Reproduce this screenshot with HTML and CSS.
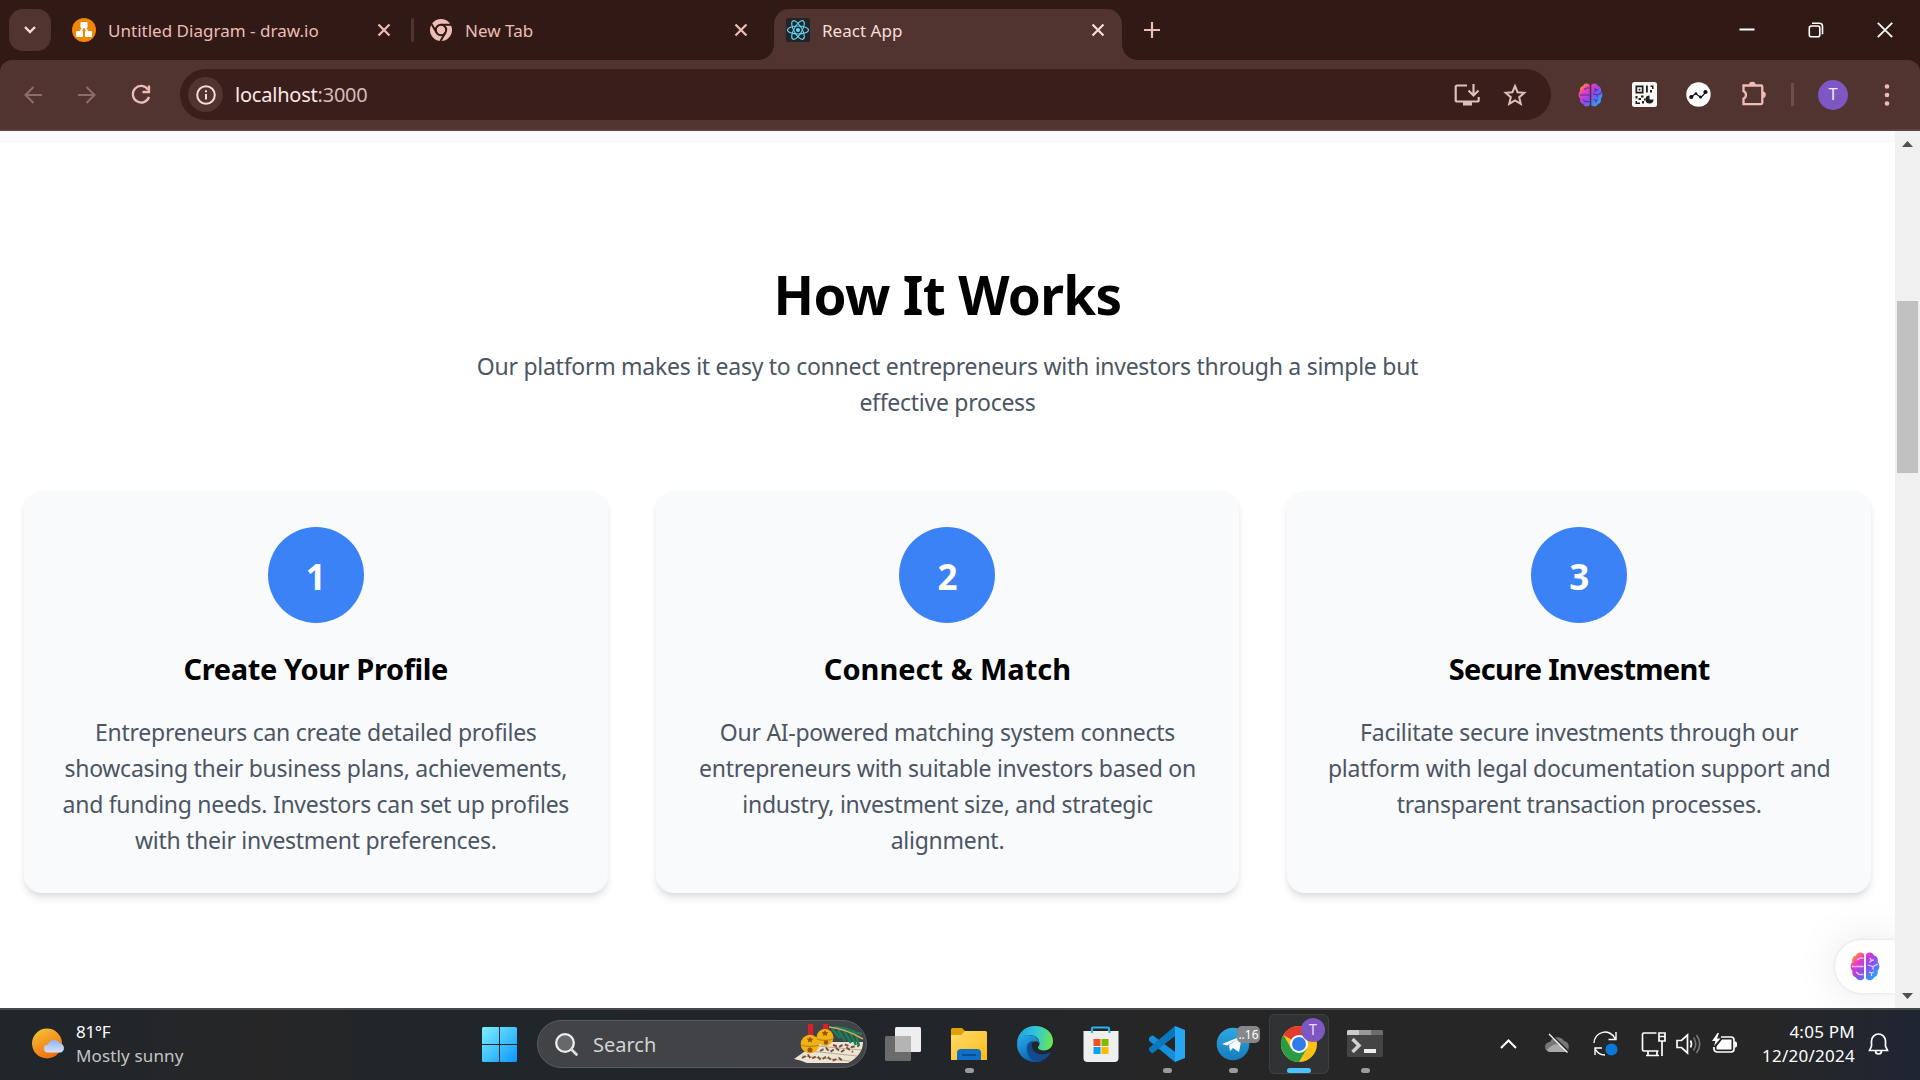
FILE: index.html
```html
<!DOCTYPE html>
<html lang="en">
<head>
<meta charset="utf-8">
<title>React App</title>
<link rel="stylesheet" href="styles.css">
</head>
<body>
<svg class="defs" width="0" height="0">
  <defs>
    <linearGradient id="brainFill" x1="0" y1="0" x2="1" y2="1"><stop offset=".08" stop-color="#ffa01c"/><stop offset=".3" stop-color="#f135c4"/><stop offset=".55" stop-color="#8a4cf0"/><stop offset=".88" stop-color="#21a9ff"/></linearGradient>
    <symbol id="brain" viewBox="0 0 30 29">
      <path fill="url(#brainFill)" d="M14 2.5C12-.5 7 0 6 3.500 2.500 4 1.500 8 2.500 10 0 12 0 17 2.500 19 1.500 22 3.500 25 6 25.500 7.500 29 12 29 14 26.500ZM16 2.500C18-.5 23 0 24 3.500 27.500 4 28.500 8 27.500 10 30 12 30 17 27.500 19 28.500 22 26.500 25 24 25.500 22.500 29 18 29 16 26.500Z"/>
      <path fill="none" stroke="currentColor" stroke-width="1.300" d="M13.500 6H10L7 8M2 14.500H13.500M6 20l3 2.500h4.500M20 6l1.500 2.500L24 8M21.500 8.500l-2 2M18 13l5 1.500L28 12M23 14.500v3M19 20l2.500 1 2.500-1M21.500 21v3"/>
    </symbol>
    <symbol id="close" viewBox="0 0 14 14"><path d="M1.500 1.500l11 11M12.500 1.500l-11 11" fill="none" stroke="currentColor" stroke-width="2.200"/></symbol>
  </defs>
</svg>
<div class="screen">
  <header class="tabstrip">
    <button class="tab-search"><svg width="14" height="10" viewBox="0 0 14 10"><path d="M2 2l5 5 5-5" fill="none" stroke="#f3dcd8" stroke-width="2.400"/></svg></button>
    <div class="tab tab-first">
      <svg width="24" height="24" viewBox="0 0 24 24"><circle cx="12" cy="12" r="12" fill="#f08705"/><path d="M12 7L7.500 16M12 7l4.500 9" stroke="#fff" stroke-width="1.800"/><g fill="#fff"><rect x="8.500" y="4" width="7" height="6" rx="1"/><rect x="4" y="13" width="7" height="6" rx="1"/><rect x="13" y="13" width="7" height="6" rx="1"/></g></svg>
      <span class="tab-title">Untitled Diagram - draw.io</span>
      <svg class="x" width="14" height="14"><use href="#close"/></svg>
    </div>
    <i class="tab-sep"></i>
    <div class="tab tab-second">
      <svg width="22" height="22" viewBox="0 0 22 22"><circle cx="11" cy="11" r="11" fill="#edbdb5"/><circle cx="11" cy="11" r="5.200" fill="#edbdb5" stroke="#311a16" stroke-width="2"/><path d="M11 5.800H21M6.500 13.600L1.500 5M15.500 13.600L10.500 22" stroke="#311a16" stroke-width="2"/></svg>
      <span class="tab-title">New Tab</span>
      <svg class="x" width="14" height="14"><use href="#close"/></svg>
    </div>
    <div class="tab tab-active">
      <svg width="24" height="24" viewBox="0 0 24 24"><rect width="24" height="24" rx="2" fill="#222427"/><g fill="none" stroke="#61dafb" stroke-width="1.100"><ellipse cx="12" cy="12" rx="10.500" ry="4"/><ellipse cx="12" cy="12" rx="10.500" ry="4" transform="rotate(60 12 12)"/><ellipse cx="12" cy="12" rx="10.500" ry="4" transform="rotate(120 12 12)"/></g><circle cx="12" cy="12" r="2" fill="#61dafb"/></svg>
      <span class="tab-title">React App</span>
      <svg class="x" width="14" height="14"><use href="#close"/></svg>
    </div>
    <svg class="plus" width="16" height="16" viewBox="0 0 16 16"><path d="M8 0v16M0 8h16" stroke="#edbdb5" stroke-width="2.200"/></svg>
    <div class="win-controls">
      <svg width="16" height="16" viewBox="0 0 16 16"><path d="M.5 7.500h15" stroke="#fff" stroke-width="2"/></svg>
      <svg width="16" height="16" viewBox="0 0 16 16" fill="none" stroke="#fff" stroke-width="1.600"><rect x="1.300" y="4" width="10.500" height="10.700" rx="2"/><path d="M4 1.300h7.500a3 3 0 0 1 3 3v8"/></svg>
      <svg width="16" height="16" viewBox="0 0 16 16"><path d="M.8.8l14.400 14.400M15.200.8L.8 15.200" stroke="#fff" stroke-width="1.800"/></svg>
    </div>
  </header>

  <nav class="toolbar">
    <svg class="back dim" width="18" height="18" viewBox="0 0 18 18"><path d="M18 9H2M9.500 1L1.500 9l8 8" fill="none" stroke="currentColor" stroke-width="2"/></svg>
    <svg class="fwd dim" width="18" height="18" viewBox="0 0 18 18"><path d="M0 9h16M8.500 1l8 8-8 8" fill="none" stroke="currentColor" stroke-width="2"/></svg>
    <svg class="reload" width="20" height="20" viewBox="0 0 20 20"><path d="M17 4.500A8.300 8.300 0 1 0 18 12M18 .5V7h-6.500" fill="none" stroke="#edbdb5" stroke-width="2.300"/></svg>
    <div class="omnibox">
      <span class="site-info"><svg width="20" height="20" viewBox="0 0 20 20"><circle cx="10" cy="10" r="8.800" fill="none" stroke="#f3dcd8" stroke-width="2"/><path d="M10 9v5.500M10 5.300v2" stroke="#f3dcd8" stroke-width="2"/></svg></span>
      <span class="url">localhost<span class="port">:3000</span></span>
      <svg class="install" width="26" height="24" viewBox="0 0 26 24"><path d="M13 2.500H3.200a1.500 1.500 0 0 0-1.500 1.500v13a1.500 1.500 0 0 0 1.500 1.500h20a1.500 1.500 0 0 0 1.500-1.500v-3M19.500 1v11M14.500 7.500l5 5 5-5" fill="none" stroke="#dcc0bc" stroke-width="2.200"/><path d="M9 18h9v4.500H9z" fill="#dcc0bc"/></svg>
      <svg class="star" width="24" height="24" viewBox="0 0 24 24"><path d="M12 3l2.600 6.200 6.700.6-5.100 4.400 1.600 6.600-5.800-3.500-5.800 3.500 1.600-6.600-5.100-4.400 6.700-.6z" fill="none" stroke="#dcc0bc" stroke-width="2"/></svg>
    </div>
    <svg class="ext-brain" width="25" height="24"><use href="#brain"/></svg>
    <svg class="ext-qr" width="25" height="25" viewBox="0 0 25 25"><rect width="25" height="25" rx="2.500" fill="#f8f7f6"/><g fill="#1d1d1d"><path d="M3.500 3.500h8v8h-8zM5.200 5.200v4.600h4.600V5.200z" fill-rule="evenodd"/><path d="M6.700 6.700h1.700v1.700H6.700zM14 3.500h1.800v7H14zM18.500 3.500h3v3.500h-1.500v-2h-1.500zM18 8h2v2.500h-2zM3.500 14h2v2.500h-2zM9 13.500h2.500v2H9zM6.500 16h2.500v2H6.500zM3.500 19h1.500v1.500h3V22H3.500zM10 19h2v2.500h-2zM12 16.500h1.500v2H12z"/><path d="M17.500 13.500v4h4a4 4 0 1 1-4-4z"/></g></svg>
    <svg class="ext-chart" width="25" height="25" viewBox="0 0 25 25"><circle cx="12.500" cy="12.500" r="12.200" fill="#fff"/><path d="M5 15.500l4.500-4 5.500 4 5-5.500" fill="none" stroke="#111" stroke-width="1.200"/><g fill="#111"><circle cx="5.300" cy="15" r="2.100"/><circle cx="10" cy="11.500" r="1.300"/><circle cx="14.500" cy="15" r="1.500"/><circle cx="19.500" cy="10" r="2.100"/></g></svg>
    <svg class="ext-puzzle" width="26" height="25" viewBox="0 0 26 25"><path d="M2.500 4.500h17.500a1.300 1.300 0 0 1 1.300 1.300v16a1.300 1.300 0 0 1-1.300 1.300H2.500v-5.500c3-1 3.500-6 0-7.500z" fill="none" stroke="#edbdb5" stroke-width="2.300"/><path d="M8 4a3.300 3.300 0 0 1 6.600 0zM21.500 10.500a3.300 3.300 0 0 1 0 6.600z" fill="#edbdb5"/></svg>
    <i class="bar-sep"></i>
    <span class="avatar">T</span>
    <svg class="menu" width="6" height="24" viewBox="0 0 6 24" fill="#edbdb5"><circle cx="3" cy="3.500" r="2.300"/><circle cx="3" cy="12" r="2.300"/><circle cx="3" cy="20.500" r="2.300"/></svg>
  </nav>

  <div class="viewport">
    <main class="page">
      <section class="how">
        <h2>How It Works</h2>
        <p class="lead">Our platform makes it easy to connect entrepreneurs with investors through a simple but<br>effective process</p>
        <div class="cards">
          <article class="card"><div class="num">1</div><h3 class="h-create">Create Your Profile</h3><p>Entrepreneurs can create detailed profiles<br>showcasing their business plans, achievements,<br>and funding needs. Investors can set up profiles<br>with their investment preferences.</p></article>
          <article class="card"><div class="num">2</div><h3>Connect &amp; Match</h3><p>Our AI-powered matching system connects<br>entrepreneurs with suitable investors based on<br>industry, investment size, and strategic<br>alignment.</p></article>
          <article class="card"><div class="num">3</div><h3 class="h-secure">Secure Investment</h3><p>Facilitate secure investments through our<br>platform with legal documentation support and<br>transparent transaction processes.</p></article>
        </div>
      </section>
      <div class="fab"><svg width="30" height="29"><use href="#brain"/></svg></div>
    </main>
    <div class="scrollbar"><i class="arrow up"></i><i class="thumb"></i><i class="arrow down"></i></div>
  </div>

  <footer class="taskbar">
    <div class="weather">
      <svg width="34" height="32" viewBox="0 0 34 32"><defs><linearGradient id="sun" x1=".2" y1="0" x2=".7" y2="1"><stop offset="0" stop-color="#f5bf36"/><stop offset="1" stop-color="#f26a0d"/></linearGradient><linearGradient id="cl" x1="0" y1="0" x2="0" y2="1"><stop offset="0" stop-color="#8fb4f0"/><stop offset="1" stop-color="#d5e2fa"/></linearGradient></defs><circle cx="15" cy="15.500" r="15" fill="url(#sun)"/><path d="M16 24.500a4 4 0 0 1 0-8 6.500 6.500 0 0 1 12-1 4.700 4.700 0 0 1 1 9z" fill="url(#cl)"/></svg>
      <div class="weather-text"><span class="temp">81°F</span><span class="sky">Mostly sunny</span></div>
    </div>
    <svg class="start" width="35" height="35" viewBox="0 0 35 35"><defs><linearGradient id="win" gradientUnits="userSpaceOnUse" x1="0" y1="0" x2="35" y2="35"><stop offset="0" stop-color="#7cf0ff"/><stop offset="1" stop-color="#0a96ff"/></linearGradient></defs><path fill="url(#win)" d="M1.500 0H17v17H0V1.500A1.500 1.500 0 0 1 1.500 0zM18 0h15.500A1.500 1.500 0 0 1 35 1.500V17H18zM0 18h17v17H1.500A1.500 1.500 0 0 1 0 33.500zM18 18h17v15.500a1.500 1.500 0 0 1-1.500 1.500H18z"/></svg>
    <div class="search">
      <svg width="23" height="23" viewBox="0 0 23 23"><circle cx="10" cy="10" r="8.800" fill="#66686a" stroke="#eee" stroke-width="2.300"/><path d="M16.500 16.500l5 5" stroke="#ddd" stroke-width="2.800" stroke-linecap="round"/></svg>
      <span>Search</span>
      <svg class="bells" width="72" height="40" viewBox="0 0 72 40"><path d="M1 35L25 18 70 18Q70 31 55 39L14 39Q7 36 1 35z" fill="#ece4d4"/><path d="M9 32l48 5M17 27l47 5M24 22l44 4" stroke="#b29b82" stroke-width=".8"/><path d="M9 34l6-3 3 4 6-3 4 4 6-4 5 5 7-3 4 3M27 27l6-3 4 4 6-4 5 4 6-4 6 4M40 21l6 2 5-3 7 3 8-1" fill="none" stroke="#765039" stroke-width="1.900" stroke-dasharray="4 2.500"/><path d="M39 5l8 9M45 6l7 11M51 7l7 12M57 9l6 12M63 11l3 11M41 3l13 2M49 4l13 4M55 7l14 3" stroke="#17805a" stroke-width="2.600"/><path d="M36 3q17 2 34 12" fill="none" stroke="#d3a95c" stroke-width="1.500"/><path d="M15 0h5v12h-5zM30 0h5v7h-5z" fill="#dc1f2d"/><circle cx="17" cy="20" r="9.300" fill="#efb315"/><circle cx="32" cy="13.500" r="8.500" fill="#efb315"/><path d="M8 21q9 3 18 0M24 15q8 3 16 0" fill="none" stroke="#c3860f" stroke-width="1.300"/><g fill="#a3520e"><path d="M17 12.500l1 2 2.300.3-1.600 1.600.4 2-2.100-1-2.100 1 .4-2-1.600-1.600 2.300-.3zM32 6l1 2 2.300.3-1.600 1.600.4 2-2.100-1-2.100 1 .4-2-1.600-1.600 2.300-.3z"/><circle cx="17" cy="26" r="2.500"/><circle cx="33" cy="18.500" r="2.200"/></g></svg>
    </div>
    <div class="apps">
      <div class="app"><svg width="36" height="36" viewBox="0 0 36 36"><rect x="10" y="1" width="26" height="25" rx="1.500" fill="#eee"/><rect y="10" width="26" height="25" rx="1.500" fill="#6b6b6b"/><path d="M10 10h16v16H10z" fill="#b4b4b4"/></svg></div>
      <div class="app"><svg width="36" height="36" viewBox="0 0 36 36"><defs><linearGradient id="fold" x1="0" y1="0" x2="1" y2="1"><stop stop-color="#ffdc6c"/><stop offset="1" stop-color="#fdb917"/></linearGradient></defs><path d="M0 3.500A1.500 1.500 0 0 1 1.500 2H11l4 4-4 4H0z" fill="#e0a106"/><path d="M0 9h10l4-4h20.500A1.500 1.500 0 0 1 36 6.500V34H0z" fill="url(#fold)"/><path d="M6 34V27a4 4 0 0 1 4-4h16a4 4 0 0 1 4 4v7z" fill="#0f6fc6"/><path d="M11 29h14" stroke="#0b4688" stroke-width="1.600"/></svg><i class="dot"></i></div>
      <div class="app"><svg width="36" height="36" viewBox="0 0 36 36"><defs><linearGradient id="e1" x1="0" y1=".4" x2="1" y2=".5"><stop stop-color="#20a4dc"/><stop offset=".5" stop-color="#31c5dd"/><stop offset="1" stop-color="#6be84b"/></linearGradient><linearGradient id="e2" x1="0" y1="0" x2=".6" y2="1"><stop stop-color="#2bb0ee"/><stop offset="1" stop-color="#075cae"/></linearGradient></defs><path d="M0 18C0 7 8 0 18 0c11 0 18 7 18 15 0 6-4 9.500-9 9.500-4 0-6-1.500-6-3 0-1 1.500-1.500 1.500-4C22.500 11 16 8.500 11 9 6 9.500 1 13 0 18z" fill="url(#e1)"/><path d="M0 19C0 12 6 9 11 9c6 0 11.500 3 11.500 9-1-3-5-4-8-1-6 6 0 17 11 18a18 18 0 0 1-7.500 1C8 36 0 28 0 19z" fill="url(#e2)"/><path d="M10 24C9 18 13 15 16 15c-4 7 2 15 12 13 3-.5 5-2.500 5.500-1C30 33 25 35.500 20 35.500 14 35 10.500 29 10 24z" fill="#114a8e"/></svg></div>
      <div class="app"><svg width="36" height="36" viewBox="0 0 36 36"><path d="M9 8V2.500A1 1 0 0 1 10 1.500h15a1 1 0 0 1 1 1V8" fill="none" stroke="#26b2f2" stroke-width="2.200"/><path d="M.5 5H35.500V32a4 4 0 0 1-4 4h-27a4 4 0 0 1-4-4z" fill="#efefef"/><path d="M9 7V5M26.500 7V5" stroke="#26b2f2" stroke-width="2.200"/><path d="M10.500 13h7v7h-7z" fill="#f25022"/><path d="M18.500 13h7v7h-7z" fill="#7fba00"/><path d="M10.500 21h7v7h-7z" fill="#00a4ef"/><path d="M18.500 21h7v7h-7z" fill="#ffb900"/></svg></div>
      <div class="app"><svg width="36" height="36" viewBox="0 0 36 36"><path d="M26 0L10 16 4 10 0 12v3l26 21V26L14 18 26 10z" fill="#0875bf"/><path d="M26 26L4 9.500Q2 9 0 12v2l26 22z" fill="#168fd8"/><path d="M0 24q2 4 4 3L26 10V0L0 22z" fill="#0877bd"/><path d="M26 0l10 4v28l-10 4z" fill="#27a7f3"/></svg><i class="dot"></i></div>
      <div class="app"><svg width="36" height="36" viewBox="0 0 36 36"><defs><linearGradient id="tg" x1="0" y1="0" x2="0" y2="1"><stop stop-color="#2ea9e5"/><stop offset="1" stop-color="#167bba"/></linearGradient></defs><circle cx="18" cy="18" r="16.300" fill="url(#tg)"/><path d="M7 18L27 10 24 26 18 22l-3 3-1-6 9-6-11 6.500z" fill="#fff"/></svg><b class="count">..16</b><i class="dot"></i></div>
      <div class="app current"><svg width="36" height="36" viewBox="0 0 36 36"><circle cx="18" cy="18" r="18" fill="#fbc116"/><path d="M18 18L2.400 9A18 18 0 0 1 33.600 9H18z" fill="#e33b2e"/><path d="M18 36A18 18 0 0 1 2.400 9L10.200 22.500 18 27l7.800-4.500z" fill="#2a9c46"/><circle cx="18" cy="18" r="9" fill="#fff"/><circle cx="18" cy="18" r="7" fill="#2f7de9"/></svg><b class="user">T</b><i class="dot"></i></div>
      <div class="app"><svg width="36" height="36" viewBox="0 0 36 36"><rect y="4" width="36" height="27" rx="1.500" fill="#444"/><path d="M0 9V5.500A1.500 1.500 0 0 1 1.500 4H12v5z" fill="#ccc"/><path d="M12 4h12v5H12z" fill="#999"/><path d="M24 4h10.500A1.500 1.500 0 0 1 36 5.500V9H24z" fill="#6d6d6d"/><path d="M5.500 13l6.500 6.500L5.500 26" fill="none" stroke="#cfcfcf" stroke-width="3.500"/><path d="M17 23h12v4H17z" fill="#eee"/></svg><i class="dot"></i></div>
    </div>
    <div class="tray">
      <svg class="chev" width="17" height="10" viewBox="0 0 17 10"><path d="M1 9l7.500-7.500L16 9" fill="none" stroke="#fff" stroke-width="2"/></svg>
      <svg class="cloud" width="25" height="20" viewBox="0 0 25 20"><path d="M5 18a5 5 0 0 1 0-10A8 8 0 0 1 19 7a5.700 5.700 0 0 1 1 11z" fill="#777"/><path d="M2 16Q9 8 15 11l9 5q-2 2-5 2H5q-2 0-3-2z" fill="#a8a8a8"/><path d="M5.500 .5l19 18" stroke="#262626" stroke-width="2"/><path d="M4 0l18.500 18.500" stroke="#fff" stroke-width="1.300"/></svg>
      <svg class="sync" width="26" height="26" viewBox="0 0 26 26"><path d="M1 12A11 11 0 0 1 22 7.500M23 1v7.500h-7.500M2 24v-7h7M2 17.500Q5 24 12 24" fill="none" stroke="#fff" stroke-width="1.400"/><circle cx="18.500" cy="18.500" r="6" fill="#0b78d8"/></svg>
      <svg class="net" width="26" height="26" viewBox="0 0 26 26"><path d="M15.500 2H3a1.500 1.500 0 0 0-1.500 1.500v15A1.500 1.500 0 0 0 3 20h14.500M7 20v4M16 20v4M5 24.500h13M18 2h6v8h-6zM21 10v15M18 5.500h6" fill="none" stroke="#fff" stroke-width="1.700"/></svg>
      <svg class="vol" width="26" height="22" viewBox="0 0 26 22"><path d="M1 7.500h4.500L11.500 2v18L5.500 14.500H1z" fill="none" stroke="#fff" stroke-width="1.700"/><path d="M14.500 7.500q2 3.500 0 7" fill="none" stroke="#fff" stroke-width="1.600"/><path d="M17.500 4.500q4.500 6.500 0 13M20.500 2q6.500 9 0 18" fill="none" stroke="#777" stroke-width="1.600"/></svg>
      <svg class="bat" width="26" height="22" viewBox="0 0 26 22"><path d="M9 4h10a3 3 0 0 1 3 3v9a3 3 0 0 1-3 3H5a3 3 0 0 1-3-3v-2" fill="none" stroke="#fff" stroke-width="1.700"/><path d="M10 6.500h9.500v10H4.500v-3zM22.500 8.500H24l1 1.500v3l-1 1.500h-1.500z" fill="#fff"/><path d="M5.500 0L0 8h3.500L2 13l6.500-7.500H5L7 0z" fill="#fff"/></svg>
      <div class="clock"><span class="time">4:05 PM</span><span class="date">12/20/2024</span></div>
      <svg class="bell" width="21" height="24" viewBox="0 0 21 24"><path d="M1.500 18.500L3.500 14V9a7 7 0 0 1 14 0v5l2 4.500zM7.500 19a3 3 0 0 0 6 0" fill="none" stroke="#fff" stroke-width="1.700"/></svg>
    </div>
  </footer>
</div>
</body>
</html>
```

FILE: styles.css
```css
* { box-sizing: border-box; margin: 0; padding: 0; }
body { width: 1920px; height: 1080px; overflow: hidden; font-family: "Noto Sans", "Open Sans", sans-serif; background: #fff; }
svg { display: block; flex: none; overflow: visible; }
i { font-style: normal; flex: none; }
.defs { position: absolute; }
.screen { display: grid; grid-template-rows: 60px 71px 877px 72px; width: 1920px; height: 1080px; }

.tabstrip { display: flex; align-items: center; background: #311a16; padding-left: 9px; }
.tab-search { display: grid; place-items: center; width: 42px; height: 42px; border: 0; border-radius: 14px; background: #513330; }
.tab { display: flex; align-items: center; height: 51px; white-space: nowrap; color: #edbdb5; }
.tab-title { font-size: 17px; line-height: 24px; padding-top: 1px; letter-spacing: .02px; }
.x { margin-left: auto; }
.tab-first { width: 319px; margin-left: 21px; gap: 12px; }
.tab-sep { width: 3px; height: 24px; margin-left: 20px; border-radius: 2px; background: #513330; }
.tab-second { width: 318px; margin-left: 16px; gap: 13px; }
.tab-active { position: relative; align-self: flex-end; width: 348px; margin-left: 26px; padding: 0 17px 9px 12px; gap: 12px; border-radius: 15px 15px 0 0; background: #513330; color: #f6dedb; }
.tab-active::before, .tab-active::after { content: ""; position: absolute; bottom: 0; width: 15px; height: 15px; }
.tab-active::before { left: -15px; background: radial-gradient(circle at 0 0, #311a16 14.500px, #513330 15px); }
.tab-active::after { right: -15px; background: radial-gradient(circle at 100% 0, #311a16 14.500px, #513330 15px); }
.plus { margin-left: 22px; }
.win-controls { display: flex; gap: 53px; margin-left: auto; padding-right: 27px; }

.toolbar { display: flex; align-items: center; padding-left: 24px; border-bottom: 2px solid #5a4441; border-radius: 12px 12px 0 0; background: #513330; box-shadow: 0 -12px 0 0 #311a16; clip-path: inset(0); }
.viewport, .toolbar { min-width: 0; }
.screen { background: linear-gradient(#311a16 100px, #fff 100px); }
.dim { color: #8e6d69; }
.fwd { margin-left: 36px; }
.reload { margin-left: 35px; }
.omnibox { display: flex; align-items: center; width: 1371px; height: 51px; margin-left: 29px; padding-left: 8px; border-radius: 26px; background: #3a1e1b; }
.site-info { display: grid; place-items: center; width: 35px; height: 35px; border-radius: 50%; background: #513330; }
.url { margin-left: 12px; font-size: 20px; line-height: 30px; color: #fbe9e6; letter-spacing: -.22px; }
.port { color: #d4bcb8; }
.install { margin-left: auto; }
.star { margin: 0 24px 0 23px; }
.ext-brain { margin-left: 27px; color: #47339a; }
.ext-qr { margin-left: 29px; }
.ext-chart { margin-left: 29px; }
.ext-puzzle { margin-left: 30px; margin-top: -3px; }
.bar-sep { width: 3px; height: 23px; margin-left: 24px; background: #704d49; }
.avatar { display: grid; place-items: center; width: 30px; height: 30px; margin-left: 24px; border-radius: 50%; background: #7e57c2; color: #f0e8fb; font: 16px Roboto, sans-serif; }
.menu { margin-left: 36px; }

.viewport { display: flex; background: #fff; }
.page { position: relative; width: 1895px; overflow: hidden; border-top: 12px solid #f9fafc; }
.how { padding: 120px 24px 0; text-align: center; }
h2 { font-size: 53px; line-height: 60px; padding-top: 2px; height: 60px; white-space: nowrap; color: #000; letter-spacing: -.65px; }
.lead { margin-top: 24px; }
.how p { height: auto; padding-top: 1px; margin-bottom: -1px; font-size: 23px; line-height: 36px; color: #4b5563; white-space: nowrap; letter-spacing: -.27px; }
.cards { display: grid; grid-template-columns: repeat(3, minmax(0, 1fr)); gap: 48px; margin-top: 72px; }
.card { height: 402px; padding: 36px; border-radius: 18px; background: #f9fafc; box-shadow: 0 6px 9px -1.500px rgba(0,0,0,.1), 0 3px 6px -3px rgba(0,0,0,.1); display: flex; flex-direction: column; align-items: center; }
.num { display: grid; place-items: center; width: 96px; height: 96px; border-radius: 50%; background: #3b82f6; color: #fff; font-size: 35px; font-weight: 700; line-height: 48px; padding-top: 3px; }
h3 { height: 42px; margin: 24px 0; padding-top: 1px; font-size: 29px; line-height: 42px; color: #000; white-space: nowrap; }
.h-create { letter-spacing: -.38px; }
.h-secure { letter-spacing: -.69px; }
.fab { position: absolute; right: 0; bottom: 15px; display: flex; align-items: center; width: 60px; height: 53px; padding-left: 15px; border-radius: 27px 0 0 27px; background: #fff; color: #f0c8ff; box-shadow: 0 0 3px rgba(0,0,0,.12), 0 0 45px rgba(0,0,0,.1); }
.scrollbar { display: flex; flex-direction: column; align-items: center; width: 25px; background: #f0f0f0; padding: 10px 0 9px; }
.arrow { width: 11px; height: 6px; background: #505050; }
.up { clip-path: polygon(50% 0, 100% 100%, 0 100%); }
.down { margin-top: auto; clip-path: polygon(0 0, 100% 0, 50% 100%); }
.thumb { width: 21px; height: 172px; margin-top: 154px; background: #c1c1c1; }

.taskbar { display: flex; align-items: center; padding-bottom: 2px; border-top: 2px solid #47494b; background: linear-gradient(90deg, #20262b, #262627 14%, #20262a 24%, #222529 50%, #262627 60%, #262627 92%, #1f2632); }
.weather { display: flex; align-items: center; width: 450px; margin-right: 32px; padding-left: 32px; gap: 10px; }
.weather-text { display: flex; flex-direction: column; font-size: 17px; line-height: 24px; white-space: nowrap; color: #fff; }
.sky { color: #c4c4c4; letter-spacing: .15px; }
.temp { letter-spacing: -.3px; }
.search { display: flex; align-items: center; width: 330px; height: 48px; margin-left: 20px; padding: 0 1px 0 17px; border: 1.500px solid #5b5d60; border-radius: 24px; background: #414346; color: #d2d3d4; font-size: 20px; }
.search span { margin-left: 15px; }
.bells { margin-left: auto; border-radius: 0 20px 20px 0; overflow: hidden; }
.apps { display: flex; margin-left: 3px; }
.app { position: relative; display: flex; align-items: center; justify-content: center; width: 66px; height: 60px; }
.dot { position: absolute; left: 28.500px; bottom: 1px; width: 9px; height: 5px; border-radius: 3px; background: #9a9b9c; }
.count { position: absolute; left: 37px; top: 12px; width: 23px; height: 17px; border-radius: 5px; background: #858789; color: #fff; font-size: 12px; font-weight: 400; line-height: 17px; text-align: center; }
.current { width: 60px; margin: 0 3px; border-radius: 6px; background: #303234; box-shadow: inset 0 0 0 1px #3d3f41; }
.current .dot { left: 18px; width: 24px; background: #4cc2ff; }
.user { position: absolute; left: 32px; top: 4px; width: 24px; height: 24px; border-radius: 50%; background: #7e57c2; color: #e9dcff; font: 14px/24px Roboto, sans-serif; text-align: center; }
.tray { display: flex; align-items: center; margin-left: auto; padding-right: 31px; }
.cloud { margin-left: 28px; }
.sync { margin-left: 23px; }
.net { margin-left: 22px; }
.vol { margin-left: 9px; }
.bat { margin-left: 10px; }
.clock { display: flex; flex-direction: column; align-items: flex-end; width: 117px; font-size: 17px; line-height: 24px; white-space: nowrap; color: #fff; letter-spacing: .25px; }
.bell { margin-left: 13px; }
```
